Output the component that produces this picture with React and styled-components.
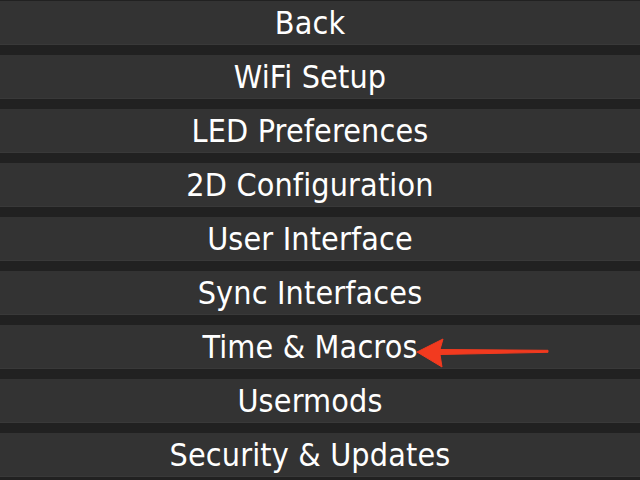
import React from "react";
import styled, { createGlobalStyle } from "styled-components";

const Global = createGlobalStyle`
  html, body { margin: 0; padding: 0; background: #212121; }
  body { width: 640px; height: 480px; overflow: hidden; }
`;

const Menu = styled.div`
  display: flex;
  flex-direction: column;
  gap: 10px;
  padding-top: 1px;
  background: #212121;
  height: 480px;
  box-sizing: border-box;
  overflow: hidden;
`;

const Item = styled.div`
  position: relative;
  flex: 0 0 44px;
  height: 44px;
  background: #333333;
  border-bottom: 1px solid #393939;
  box-sizing: border-box;
  display: flex;
  align-items: center;
  justify-content: center;
  padding-right: 20px;
  color: #ffffff;
  font-family: "DejaVu Sans Condensed", "DejaVu Sans", Verdana, sans-serif;
  font-size: 32px;
  letter-spacing: 0.15px;
  line-height: 1;
  padding-top: 1px;
`;

const Arrow = styled.svg`
  position: absolute;
  left: 410px;
  top: 330px;
  width: 150px;
  height: 45px;
  pointer-events: none;
`;

const items = [
  "Back",
  "WiFi Setup",
  "LED Preferences",
  "2D Configuration",
  "User Interface",
  "Sync Interfaces",
  "Time & Macros",
  "Usermods",
  "Security & Updates",
];

export default function App() {
  return (
    <>
      <Global />
      <Menu>
        {items.map((t) => (
          <Item key={t}>{t}</Item>
        ))}
      </Menu>
      <Arrow viewBox="410 330 150 45">
        <path
          d="M417 352 L443 339 L440 349.5 L548 350.3 L548 352.3 L440 354.5 L442 367 Z"
          fill="#f23a1f"
          stroke="#f23a1f"
          strokeWidth="1"
          strokeLinejoin="round"
        />
      </Arrow>
    </>
  );
}
